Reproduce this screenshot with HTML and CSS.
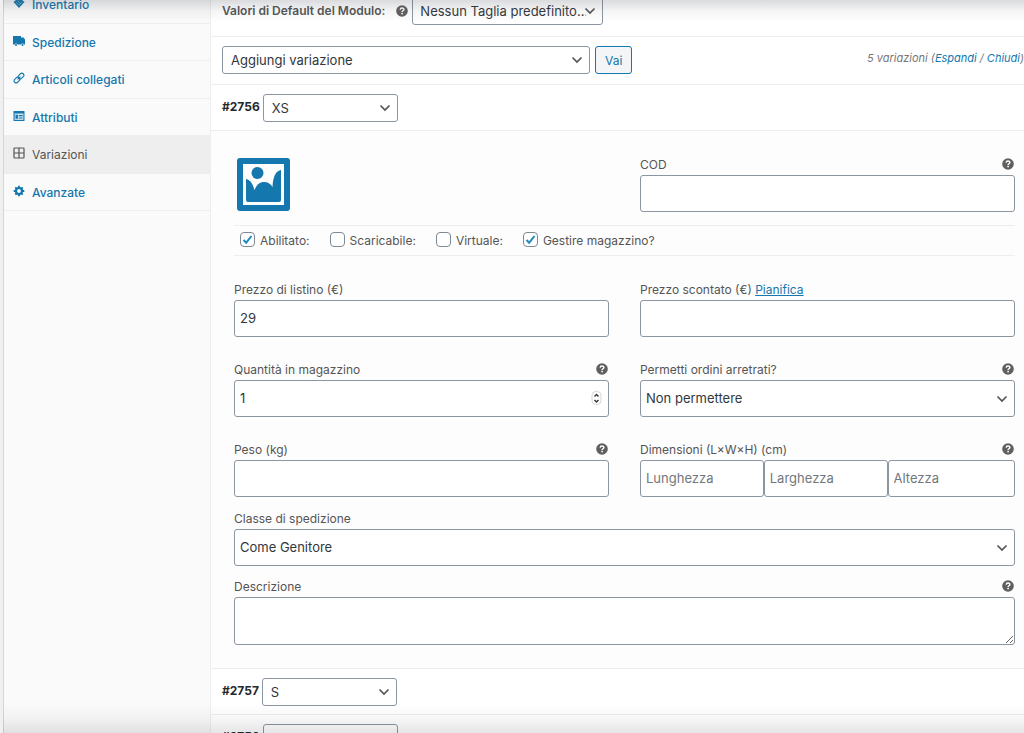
FILE: index.html
```html
<!DOCTYPE html>
<html lang="it">
<head>
<meta charset="utf-8">
<meta name="viewport" content="width=device-width, initial-scale=1">
<title>Variazioni prodotto</title>
<link rel="stylesheet" href="styles.css">
</head>
<body>
<svg class="sprite" aria-hidden="true">
  <symbol id="help" viewBox="0 0 12 12">
    <circle cx="6" cy="6" r="5.8" fill="#5f5f5f"/>
    <path d="M4.2 4.7C4.2 2.4 7.9 2.5 7.9 4.5C7.9 5.8 6.1 5.7 6.1 7" fill="none" stroke="#fff" stroke-width="1.4"/>
    <rect x="5.3" y="7.8" width="1.6" height="1.5" fill="#fff"/>
  </symbol>
</svg>
<div class="page">
  <nav class="tabs" aria-label="Dati prodotto">
    <ul class="tab-list">
      <li class="tab"><a class="tab-link" href="#inventario">
        <svg class="tab-icon" viewBox="0 0 12 12"><path d="M6 .5 11.5 5 6 11 .5 5Z" fill="currentColor"/><path d="M3 5.2 6 8 9 5.2M4.5 3.5 7.5 6.5" fill="none" stroke="#fff" stroke-opacity=".45" stroke-width=".7"/></svg>
        Inventario</a></li>
      <li class="tab"><a class="tab-link" href="#spedizione">
        <svg class="tab-icon" viewBox="0 0 12 12"><path d="M0 1h8v1.4h2.6L12 4.600v5h-1.100a1.500 1.500 0 0 0-2.900 0H4.500a1.500 1.500 0 0 0-2.900 0H0Z" fill="currentColor"/><circle cx="3" cy="9.900" r="1" fill="currentColor"/><circle cx="9.500" cy="9.900" r="1" fill="currentColor"/></svg>
        Spedizione</a></li>
      <li class="tab"><a class="tab-link" href="#collegati">
        <svg class="tab-icon" viewBox="0 0 12 12"><g fill="none" stroke="currentColor" stroke-width="1.1" transform="rotate(-45 6 6)"><rect x="0" y="4" width="6.400" height="4" rx="2"/><rect x="5.600" y="4" width="6.400" height="4" rx="2"/><path d="M4 6h4"/></g></svg>
        Articoli collegati</a></li>
      <li class="tab"><a class="tab-link" href="#attributi">
        <svg class="tab-icon" viewBox="0 0 12 12"><rect x=".5" y="1" width="11" height="10" rx=".6" fill="currentColor"/><path d="M1.6 3.5h8.8v6.4H1.6Z" fill="#fff" fill-opacity=".8"/><path d="M2.5 4.700h2.400v4H2.500ZM5.800 5h3.800v1.200H5.800ZM5.800 7.400h3.800v1.200H5.800Z" fill="currentColor"/></svg>
        Attributi</a></li>
      <li class="tab"><a class="tab-link tab-link-active" href="#variazioni" aria-current="page">
        <svg class="tab-icon" viewBox="0 0 12 12"><rect x="1" y="1" width="10" height="10" rx=".8" fill="none" stroke="currentColor" stroke-width="1.200"/><path d="M6 1v10M1 6h10" stroke="currentColor" stroke-width="1.200"/></svg>
        Variazioni</a></li>
      <li class="tab"><a class="tab-link" href="#avanzate">
        <svg class="tab-icon" viewBox="0 0 12 12"><circle cx="6" cy="6" r="3" fill="none" stroke="currentColor" stroke-width="2.2"/><path d="M6 .7v2M6 9.3v2M.7 6h2M9.3 6h2M2.3 2.3l1.3 1.3M8.4 8.4l1.3 1.3M9.7 2.3 8.4 3.6M3.6 8.4 2.3 9.7" stroke="currentColor" stroke-width="1.9"/></svg>
        Avanzate</a></li>
    </ul>
  </nav>

  <main class="panel">
    <div class="defaults">
      <label class="defaults-label" for="default-size">Valori di Default del Modulo:</label>
      <svg class="help"><use href="#help"/></svg>
      <select class="select defaults-select" id="default-size"><option>Nessun Taglia predefinito...</option></select>
    </div>

    <div class="toolbar">
      <select class="select toolbar-select" aria-label="Azione"><option>Aggiungi variazione</option></select>
      <button class="button" type="button">Vai</button>
      <span class="count">5 variazioni (<a href="#espandi">Espandi</a> / <a href="#chiudi">Chiudi</a>)</span>
    </div>

    <div class="variation-head">
      <label class="variation-id" for="size-2756">#2756</label>
      <select class="select variation-select" id="size-2756"><option>XS</option></select>
    </div>

    <form class="variation">
      <div class="row">
        <button class="picture" type="button" aria-label="Carica un'immagine">
          <svg class="picture-icon" viewBox="0 0 53 53"><path fill="currentColor" fill-rule="evenodd" d="M3 0H50A3 3 0 0 1 53 3V50A3 3 0 0 1 50 53H3A3 3 0 0 1 0 50V3A3 3 0 0 1 3 0ZM6 6V47H47V6Z"/><circle cx="20.500" cy="15" r="6" fill="currentColor"/><path fill="currentColor" d="M9 21C14 22 16 27 17.500 32C20 26 23 24 27 24C31 24 34 26 35.500 29C36 20 38 13 44 12V42Q44 44 42 44H11Q9 44 9 42Z"/></svg>
        </button>
        <div class="field">
          <div class="field-head"><label for="sku">COD</label><svg class="help"><use href="#help"/></svg></div>
          <input class="input" id="sku" type="text">
        </div>
      </div>

      <div class="options">
        <label class="option"><input class="check" type="checkbox" checked>Abilitato:</label>
        <label class="option"><input class="check" type="checkbox">Scaricabile:</label>
        <label class="option"><input class="check" type="checkbox">Virtuale:</label>
        <label class="option"><input class="check" type="checkbox" checked>Gestire magazzino?</label>
      </div>

      <div class="row row-spaced">
        <div class="field">
          <div class="field-head"><label for="price">Prezzo di listino (€)</label></div>
          <input class="input" id="price" type="text" value="29">
        </div>
        <div class="field">
          <div class="field-head"><span><label for="sale">Prezzo scontato (€)</label> <a class="schedule" href="#pianifica">Pianifica</a></span></div>
          <input class="input" id="sale" type="text">
        </div>
        <div class="field">
          <div class="field-head"><label for="stock">Quantità in magazzino</label><svg class="help"><use href="#help"/></svg></div>
          <input class="input input-number" id="stock" type="number" value="1">
        </div>
        <div class="field">
          <div class="field-head"><label for="backorders">Permetti ordini arretrati?</label><svg class="help"><use href="#help"/></svg></div>
          <select class="select input" id="backorders"><option>Non permettere</option></select>
        </div>
        <div class="field">
          <div class="field-head"><label for="weight">Peso (kg)</label><svg class="help"><use href="#help"/></svg></div>
          <input class="input" id="weight" type="text">
        </div>
        <div class="field">
          <div class="field-head"><label for="length">Dimensioni (L×W×H) (cm)</label><svg class="help"><use href="#help"/></svg></div>
          <div class="dimensions">
            <input class="input" id="length" type="text" placeholder="Lunghezza">
            <input class="input" type="text" placeholder="Larghezza" aria-label="Larghezza">
            <input class="input" type="text" placeholder="Altezza" aria-label="Altezza">
          </div>
        </div>
      </div>

      <div class="wide-fields">
        <div class="field">
          <div class="field-head"><label for="shipping">Classe di spedizione</label></div>
          <select class="select input" id="shipping"><option>Come Genitore</option></select>
        </div>
        <div class="field">
          <div class="field-head"><label for="description">Descrizione</label><svg class="help"><use href="#help"/></svg></div>
          <textarea class="input textarea" id="description"></textarea>
        </div>
      </div>
    </form>

    <div class="variation-head">
      <label class="variation-id" for="size-2757">#2757</label>
      <select class="select variation-select" id="size-2757"><option>S</option></select>
    </div>
    <div class="variation-head">
      <label class="variation-id" for="size-2758">#2758</label>
      <select class="select variation-select" id="size-2758"><option>M</option></select>
    </div>
  </main>
  <div class="shade shade-top"></div>
  <div class="shade shade-bottom"></div>
</div>
</body>
</html>
```
FILE: styles.css
```css
* {
  box-sizing: border-box;
}

body {
  margin: 0;
  font: 12px/20px Inter, "Liberation Sans", sans-serif;
  color: #555;
  background: #fff;
}

a {
  color: #1477ad;
  text-decoration: none;
}

.sprite {
  display: none;
}

.page {
  position: relative;
  display: flex;
  height: 100vh;
  overflow: hidden;
  border-left: 3px solid #f0f0f1;
}

.tabs {
  flex: none;
  width: 208px;
  background: #fafafa;
  border-left: 1px solid #d5d6d8;
  border-right: 1px solid #eee;
}

.tab-list {
  display: grid;
  grid-auto-rows: 1fr;
  height: 225px;
  margin: -14px 0 0;
  padding: 0;
  list-style: none;
}

.tab {
  display: grid;
}

.tab-link {
  display: flex;
  align-items: center;
  gap: 7px;
  padding: 2px 9px 0;
  border-bottom: 1px solid #eee;
  font-weight: 500;
}

.tab-link-active {
  color: #555;
  background: #eee;
  font-weight: 400;
}

.tab-icon {
  flex: none;
  width: 12px;
  height: 12px;
  margin-bottom: 4px;
}

.panel {
  flex: 1;
  min-width: 0;
}

.help {
  flex: none;
  width: 12px;
  height: 12px;
}

.select,
.input {
  min-width: 0;
  margin: 0;
  border: 1px solid #8c96a3;
  border-radius: 3px;
  background-color: #fff;
  color: #32373c;
  font: 13px/20px Inter, "Liberation Sans", sans-serif;
}

.select {
  appearance: none;
  height: 28px;
  padding: 0 24px 0 8px;
  background-image: url("data:image/svg+xml,%3Csvg xmlns='http://www.w3.org/2000/svg' width='12' height='8'%3E%3Cpath d='M1.500 1.500 6 6l4.500-4.500' fill='none' stroke='%23555' stroke-width='1.700'/%3E%3C/svg%3E");
  background-repeat: no-repeat;
  background-position: right 6px center;
}

.defaults,
.toolbar,
.variation-head {
  display: flex;
  align-items: center;
  border-bottom: 1px solid #eee;
}

.defaults {
  margin-top: -11px;
  padding: 8px 12px 11px 11px;
}

.defaults-label {
  margin-right: 11px;
  font-weight: 600;
}

.defaults-select {
  width: 191px;
  margin-left: 4px;
  padding: 0 16px 0 7px;
}

.toolbar {
  gap: 5px;
  padding: 9px 0 10px 11px;
}

.toolbar-select {
  width: 368px;
}

.button {
  height: 28px;
  padding: 2px 9px 0;
  border: 1px solid #1477ad;
  border-radius: 3px;
  background: #f3f5f6;
  color: #1477ad;
  font: 12px/20px Inter, "Liberation Sans", sans-serif;
}

.count {
  margin-left: auto;
  margin-bottom: 5px;
  font-size: 11px;
  font-style: italic;
  color: #777;
}

.variation-head {
  gap: 3px;
  padding: 9px 12px 8px 11px;
}

.variation-id {
  padding-bottom: 2px;
  color: #23282d;
  font-weight: 700;
}

.variation-select {
  width: 135px;
}

.variation {
  padding: 24px 9px 23px 23px;
  background: #fdfdfd;
  border-bottom: 1px solid #eee;
}

.row {
  display: grid;
  grid-template-columns: 1fr 1fr;
  gap: 23px 31px;
}

.field-head {
  display: flex;
  align-items: center;
  justify-content: space-between;
  height: 20px;
}

.field-head .help {
  margin: 0 1px 3px 0;
}

.field .input {
  display: block;
  width: 100%;
  height: 37px;
  padding: 0 5px 1px;
}

.field .input::placeholder {
  color: #72777c;
}

.picture {
  justify-self: start;
  height: 53px;
  margin: 3px 0 0 3px;
  padding: 0;
  border: 0;
  background: none;
  color: #1477ad;
}

.picture-icon {
  display: block;
  width: 53px;
  height: 53px;
}

.options {
  display: flex;
  gap: 20px;
  margin-top: 13px;
  padding: 5px 6px 4px;
  border-top: 1px solid #eee;
  border-bottom: 1px solid #eee;
}

.option {
  display: flex;
  gap: 5px;
}

.check {
  appearance: none;
  flex: none;
  width: 15px;
  height: 15px;
  margin: 1px 0 0;
  border: 1px solid #7e8993;
  border-radius: 4px;
  background: #fff center no-repeat;
}

.check:checked {
  background-image: url("data:image/svg+xml,%3Csvg xmlns='http://www.w3.org/2000/svg' width='13' height='13'%3E%3Cpath d='M2.500 7 5.200 9.700 10.500 3' fill='none' stroke='%231e8cbe' stroke-width='2'/%3E%3C/svg%3E");
}

.row-spaced {
  margin-top: 24px;
}

.schedule {
  text-decoration: underline;
}

.field .input-number {
  appearance: textfield;
  background-image: url("data:image/svg+xml,%3Csvg xmlns='http://www.w3.org/2000/svg' width='11' height='15'%3E%3Crect x='1' y='.5' width='9' height='13' rx='4' fill='%23fff' stroke='%23d5d5d5'/%3E%3Cpath d='M3.500 5.500l2-2 2 2M3.500 9l2 2 2-2' fill='none' stroke='%23333' stroke-width='1.400'/%3E%3C/svg%3E");
  background-repeat: no-repeat;
  background-position: right 6px center;
}

.input-number::-webkit-inner-spin-button {
  appearance: none;
}

.dimensions {
  display: grid;
  grid-template-columns: 33% 33% 1fr;
}

.wide-fields {
  display: grid;
  gap: 11px;
  margin-top: 12px;
}

.field .textarea {
  height: 48px;
}

.shade {
  position: absolute;
  left: -3px;
  right: 0;
  pointer-events: none;
}

.shade-top {
  top: 0;
  height: 22px;
  background: linear-gradient(rgba(70, 75, 90, 0.2), rgba(70, 75, 90, 0.06) 50%, rgba(70, 75, 90, 0));
}

.shade-bottom {
  bottom: 0;
  height: 30px;
  background: linear-gradient(rgba(0, 0, 0, 0), rgba(0, 0, 0, 0.03) 50%, rgba(0, 0, 0, 0.1));
}
```
